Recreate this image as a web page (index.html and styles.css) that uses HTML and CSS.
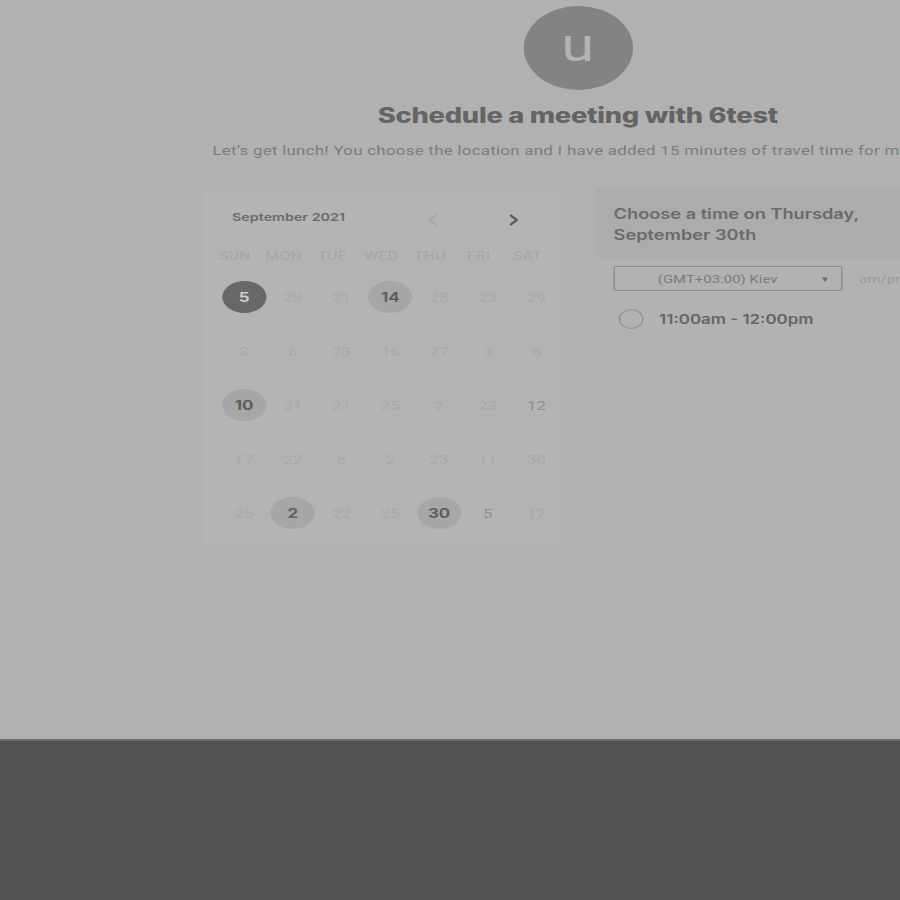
FILE: index.html
```html
<!DOCTYPE html>
<html lang="en">
<head>
<meta charset="utf-8">
<title>Schedule a meeting with 6test</title>
<link rel="stylesheet" href="styles.css">
</head>
<body>
<div class="stage">
  <div class="avatar"><span>u</span></div>
  <h1 class="title">Schedule a meeting with 6test</h1>
  <p class="desc">Let’s get lunch! You choose the location and I have added 15 minutes of travel time for me too.</p>
  <div class="main">
    <section class="calendar">
      <div class="cal-head">
        <span class="month">September 2021</span>
        <div class="nav">
          <span class="arrow prev">
            <svg width="8" height="12" viewBox="0 0 8 12"><path d="M6.5 1 L1.5 6 L6.5 11" fill="none" stroke="currentColor" stroke-width="1.4"/></svg>
          </span>
          <span class="arrow next">
            <svg width="8" height="12" viewBox="0 0 8 12"><path d="M1.5 1 L6.5 6 L1.5 11" fill="none" stroke="currentColor" stroke-width="2"/></svg>
          </span>
        </div>
      </div>
      <div class="weekdays">
        <span>SUN</span><span>MON</span><span>TUE</span><span>WED</span><span>THU</span><span>FRI</span><span>SAT</span>
      </div>
      <div class="days">
        <span class="day selected">5</span><span class="day">28</span><span class="day">21</span><span class="day avail">14</span><span class="day">25</span><span class="day">23</span><span class="day">29</span>
        <span class="day">3</span><span class="day">6</span><span class="day">23</span><span class="day">16</span><span class="day">27</span><span class="day">3</span><span class="day">8</span>
        <span class="day avail">10</span><span class="day">31</span><span class="day">21</span><span class="day">25</span><span class="day">2</span><span class="day">23</span><span class="day mid">12</span>
        <span class="day">17</span><span class="day">22</span><span class="day">6</span><span class="day">2</span><span class="day">23</span><span class="day">11</span><span class="day">30</span>
        <span class="day">26</span><span class="day avail">2</span><span class="day">22</span><span class="day">25</span><span class="day avail">30</span><span class="day mid">5</span><span class="day">17</span>
      </div>
    </section>
    <section class="times">
      <div class="times-head">Choose a time on Thursday, September 30th</div>
      <div class="times-body">
        <div class="tz-row">
          <div class="select"><span>(GMT+03:00) Kiev</span><span class="caret">▾</span></div>
          <span class="ampm">am/pm</span>
        </div>
        <label class="slot"><span class="radio"></span><span class="slot-text">11:00am - 12:00pm</span></label>
      </div>
    </section>
  </div>
</div>
<footer class="band"></footer>
</body>
</html>
```
FILE: styles.css
```css
html, body {
  margin: 0;
  padding: 0;
  overflow: hidden;
  background: #b1b1b1;
}
body {
  width: 900px;
  height: 900px;
  font-family: Roboto, "Liberation Sans", sans-serif;
}
.stage {
  width: 889px;
  height: 739px;
  transform: scaleX(1.3);
  transform-origin: 0 0;
  display: flex;
  flex-direction: column;
  align-items: center;
}
.avatar {
  margin-top: 6px;
  width: 84px;
  height: 84px;
  border-radius: 50%;
  background: #838383;
  display: flex;
  align-items: center;
  justify-content: center;
  color: #b3b3b3;
  font-family: Roboto, sans-serif;
  font-size: 46px;
  line-height: 1;
}
.avatar span { margin-top: -6px; }
.title {
  margin: 13px 0 0;
  font-family: Inter, "Liberation Sans", sans-serif;
  font-weight: 800;
  font-size: 21px;
  line-height: 26px;
  color: #646464;
  letter-spacing: -0.2px;
}
.desc {
  margin: 13px 0 0;
  white-space: nowrap;
  font-size: 13px;
  line-height: 18px;
  color: #7c7c7c;
  letter-spacing: 0.2px;
}
.main {
  margin-top: 29px;
  display: flex;
  gap: 27px;
  align-items: flex-start;
}
.calendar {
  box-sizing: border-box;
  width: 277px;
  height: 356px;
  background: #b4b4b4;
  border: 1px solid #afafaf;
  border-radius: 3px;
  padding: 17px 0 0 13px;
}
.cal-head {
  display: flex;
  align-items: center;
  height: 20px;
  padding-left: 9.5px;
  padding-right: 31px;
}
.month {
  font-family: Inter, sans-serif;
  font-weight: 600;
  font-size: 11px;
  color: #6a6a6a;
}
.nav {
  margin-left: auto;
  display: flex;
  gap: 52px;
  margin-top: 6px;
}
.arrow {
  width: 10px;
  display: flex;
  justify-content: center;
}
.arrow.prev { color: #a3a3a3; }
.arrow.next { color: #5a5a5a; }
.weekdays {
  margin: 21px 0 0 -7px;
  display: grid;
  grid-template-columns: repeat(7, 37.5px);
  font-size: 12px;
  line-height: 16px;
  color: #a6a6a6;
  text-align: center;
  letter-spacing: 0.3px;
}
.days {
  margin-top: 6px;
  display: grid;
  grid-template-columns: repeat(7, 37.5px);
  grid-auto-rows: 54px;
}
.day {
  justify-self: center;
  align-self: center;
  width: 34px;
  height: 32px;
  border-radius: 50%;
  display: flex;
  align-items: center;
  justify-content: center;
  font-size: 13px;
  color: #a9a9a9;
}
.day.mid { color: #8d8d8d; }
.day.avail {
  background: #a7a7a7;
  color: #5e5e5e;
  font-weight: 700;
  font-family: Inter, sans-serif;
}
.day.selected {
  background: #686868;
  color: #cbcbcb;
  font-weight: 700;
  font-family: Inter, sans-serif;
}
.times {
  width: 275px;
  background: #b2b2b2;
  border-radius: 3px;
}
.times-head {
  background: #acacac;
  padding: 14px 13px 12px;
  font-family: Inter, sans-serif;
  font-weight: 600;
  font-size: 14px;
  line-height: 21px;
  color: #6a6a6a;
  height: 42px;
}
.times-body {
  padding: 9px 13px 11px;
}
.tz-row {
  display: flex;
  align-items: center;
  gap: 13px;
}
.select {
  box-sizing: border-box;
  width: 176px;
  height: 25px;
  border: 1px solid #8a8a8a;
  border-radius: 2px;
  display: flex;
  align-items: center;
  padding: 0 10px 0 33px;
  font-size: 11.5px;
  color: #7a7a7a;
}
.caret {
  margin-left: auto;
  font-size: 9px;
  color: #6e6e6e;
}
.ampm {
  font-size: 11.5px;
  color: #9a9a9a;
}
.slot {
  margin-top: 18px;
  display: flex;
  align-items: center;
  padding-left: 4px;
}
.radio {
  box-sizing: border-box;
  width: 19px;
  height: 20px;
  border: 1px solid #8f8f8f;
  border-radius: 50%;
}
.slot-text {
  margin-left: 12px;
  font-family: Inter, sans-serif;
  font-weight: 600;
  font-size: 13px;
  color: #656565;
}
.band {
  height: 159px;
  background: #525252;
  border-top: 2px solid #6e6e6e;
}
```
